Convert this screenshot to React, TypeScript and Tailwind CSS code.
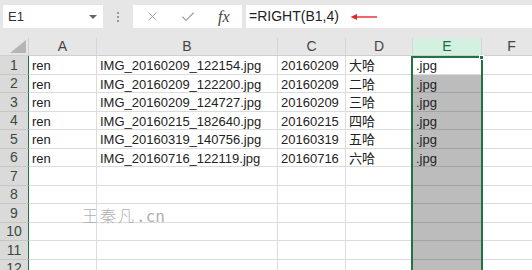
import { X, Check } from 'lucide-react';

const cols = [
  { key: 'A', w: 'w-[68px]' },
  { key: 'B', w: 'w-[181px]' },
  { key: 'C', w: 'w-[68px]' },
  { key: 'D', w: 'w-[67px]' },
  { key: 'E', w: 'w-[69px]' },
  { key: 'F', w: 'w-[60px]' },
];

const data = [
  ['ren', 'IMG_20160209_122154.jpg', '20160209', '大哈', '.jpg'],
  ['ren', 'IMG_20160209_122200.jpg', '20160209', '二哈', '.jpg'],
  ['ren', 'IMG_20160209_124727.jpg', '20160209', '三哈', '.jpg'],
  ['ren', 'IMG_20160215_182640.jpg', '20160215', '四哈', '.jpg'],
  ['ren', 'IMG_20160319_140756.jpg', '20160319', '五哈', '.jpg'],
  ['ren', 'IMG_20160716_122119.jpg', '20160716', '六哈', '.jpg'],
];

const rows = Array.from({ length: 12 }, (_, i) => i + 1);

export default function App() {
  return (
    <div className="relative w-[532px] h-[270px] overflow-hidden bg-white font-['Liberation_Sans','Noto_Sans_CJK_SC',sans-serif] text-[#222]">
      {/* formula bar */}
      <div className="h-[38px] bg-[#e6e6e6] flex items-start pt-[5px]">
        <div className="ml-[3px] w-[100px] h-[23px] bg-white flex items-center justify-between pl-[5px] pr-[3px] text-[13px] text-[#333]">
          <span>E1</span>
          <span className="w-0 h-0 border-l-[4px] border-r-[4px] border-t-[4px] border-l-transparent border-r-transparent border-t-[#666] mr-[3px]" />
        </div>
        <div className="w-[30px] h-[23px] flex flex-col items-center justify-center gap-[2px]">
          <span className="w-[2px] h-[2px] bg-[#999]" />
          <span className="w-[2px] h-[2px] bg-[#999]" />
          <span className="w-[2px] h-[2px] bg-[#999]" />
        </div>
        <div className="w-[109px] h-[23px] bg-white flex items-center">
          <X className="w-[15px] h-[15px] ml-[12px] text-[#9a9a9a]" strokeWidth={1.3} />
          <Check className="w-[16px] h-[16px] ml-[20px] text-[#9a9a9a]" strokeWidth={1.6} />
          <span className="ml-[22px] font-['Liberation_Serif',serif] italic text-[16px] text-[#444]">fx</span>
        </div>
        <div className="ml-[4px] flex-1 h-[23px] bg-white flex items-center pl-[3px] text-[14px] text-[#222]">
          <span>=RIGHT(B1,4)</span>
          <svg width="30" height="8" viewBox="0 0 30 8" className="ml-[11px]">
            <line x1="3" y1="4" x2="27" y2="4" stroke="#e3262b" strokeWidth="1.4" />
            <path d="M0.5 4 L7 1 L7 7 Z" fill="#e3262b" />
          </svg>
        </div>
      </div>

      {/* column headers */}
      <div className="flex h-[18px] bg-[#e6e6e6] border-b border-[#cfcfcf]">
        <div className="w-[29px] shrink-0 border-r border-[#cfcfcf] relative">
          <svg width="16" height="13" className="absolute right-[2px] bottom-[2px]">
            <path d="M16 0 L16 13 L0 13 Z" fill="#b5b5b5" />
          </svg>
        </div>
        {cols.map((c) => (
          <div
            key={c.key}
            className={`${c.w} shrink-0 flex items-center justify-center text-[14px] border-r border-[#d6d6d6] ${
              c.key === 'E' ? 'bg-[#d3f0e0] text-[#1e6b41]' : 'text-[#444]'
            }`}
          >
            {c.key}
          </div>
        ))}
      </div>

      {/* rows */}
      {rows.map((r) => {
        const d = data[r - 1];
        return (
          <div key={r} className="flex h-[18.5px]">
            <div className="w-[29px] shrink-0 bg-[#dadada] border-r border-r-[#217346] border-b border-b-[#c6c6c6] flex items-center justify-center pt-[1px] text-[14px] text-[#384a3e]">
              {r}
            </div>
            {cols.map((c, ci) => {
              const isE = c.key === 'E';
              const sel = isE && r > 1;
              return (
                <div
                  key={c.key}
                  className={`${c.w} shrink-0 flex items-center pl-[3px] pt-[2px] text-[13px] whitespace-nowrap overflow-hidden border-r border-b ${
                    sel ? 'bg-[#bcbcbc] border-[#a3a3a3]' : 'border-[#dcdcdc]'
                  }`}
                >
                  {d ? d[ci] : ''}
                </div>
              );
            })}
          </div>
        );
      })}

      {/* selection outline */}
      <div className="absolute left-[411px] top-[56px] w-[72px] h-[230px] border-2 border-[#217346]" />
      <div className="absolute left-[479px] top-[55px] w-[5px] h-[5px] bg-[#217346] border border-white" />

      {/* watermark */}
      <div className="absolute left-[82px] top-[203px] text-[16px] text-[#b0b0b0] tracking-[2px] font-['Noto_Sans_CJK_SC',sans-serif] font-light">
        王秦凡<span className="font-['DejaVu_Sans_Mono',monospace] tracking-normal">.cn</span>
      </div>
    </div>
  );
}
